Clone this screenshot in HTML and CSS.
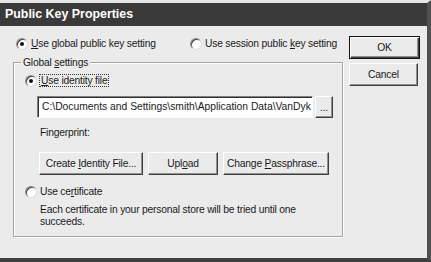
FILE: index.html
```html
<!DOCTYPE html>
<html>
<head>
<meta charset="utf-8">
<link rel="stylesheet" href="styles.css">
</head>
<body>
<div class="window">
  <div class="titlebar">Public Key Properties</div>
  <div class="main">
    <div class="left">
      <div class="toprow">
        <label class="radio r-global"><span class="dot checked"></span><span><u>U</u>se global public key setting</span></label>
        <label class="radio r-session"><span class="dot"></span><span>Use session public <u>k</u>ey setting</span></label>
      </div>
      <div class="group">
        <div class="legend">Global <u>s</u>ettings</div>
        <label class="radio r-identity"><span class="dot checked"></span><span class="focus"><u>U</u>se identity file</span></label>
        <div class="pathrow">
          <div class="field">C:\Documents and Settings\smith\Application Data\VanDyk</div>
          <div class="btn browse"><span>...</span></div>
        </div>
        <div class="fp">Fingerprint:</div>
        <div class="btnrow">
          <div class="btn b-create"><span>Create <u>I</u>dentity File...</span></div>
          <div class="btn b-upload"><span>Upl<u>o</u>ad</span></div>
          <div class="btn b-change"><span>Change <u>P</u>assphrase...</span></div>
        </div>
        <label class="radio r-cert"><span class="dot"></span><span>Use ce<u>r</u>tificate</span></label>
        <div class="desc">Each certificate in your personal store will be tried until one<br>succeeds.</div>
      </div>
    </div>
    <div class="right">
      <div class="btn default"><span>OK</span></div>
      <div class="btn cancel"><span>Cancel</span></div>
    </div>
  </div>
</div>
</body>
</html>
```
FILE: styles.css
```css
* { box-sizing: border-box; }
html, body { margin: 0; padding: 0; background: #e9e9e9; }
body { font-family: "Liberation Sans", Arial, sans-serif; font-size: 10.3px; letter-spacing: -0.2px; color: #1a1a1a; }
.window {
  width: 431px; height: 262px; background: #ebebeb;
  border-top: 3px solid #e6e6e6; border-right: 4px solid #505050; border-bottom: 4px solid #404040;
  display: flex; flex-direction: column;
}
.titlebar {
  height: 23px; background: #3a3a3a; color: #fff; font-weight: bold; font-size: 12.4px; letter-spacing: 0;
  line-height: 23px; padding-left: 5px;
}
.main { display: flex; flex: 1; }
.left { width: 343px; padding-left: 13px; flex: none; }
.right { display: flex; flex-direction: column; padding-left: 6px; padding-top: 10px; gap: 4px; }
.toprow { display: flex; height: 36px; padding-top: 10px; padding-left: 3px; white-space: nowrap; }
.radio { display: flex; align-items: center; height: 15px; gap: 3px; white-space: nowrap; }
.r-global { width: 174px; flex: none; }
.dot {
  width: 12px; height: 12px; border-radius: 50%; background: #fff; flex: none;
  border: 1px solid; border-color: #8a8a8a #dcdcdc #dcdcdc #8a8a8a;
  box-shadow: inset 1px 1px 0 #404040; position: relative;
}
.dot.checked::after {
  content: ""; position: absolute; left: 3px; top: 3px; width: 4px; height: 4px; border-radius: 50%; background: #111;
}
.group {
  width: 330px; height: 175px;
  border: 1px solid #a4a4a4; box-shadow: inset 1px 1px 0 #fff, 1px 1px 0 #fff;
  padding-left: 11px;
}
.legend { margin-top: -7px; margin-left: -4px; background: #ebebeb; width: max-content; padding: 0 2px; line-height: 13px; }
.r-identity { margin-top: 4px; }
.focus { outline: 1px dotted #333; outline-offset: 0; padding: 0 1px; }
.pathrow { display: flex; margin-top: 8px; margin-left: 12px; gap: 2px; }
.field {
  width: 276px; height: 22px; background: #fff; line-height: 19px; padding-left: 4px; white-space: nowrap; overflow: hidden; letter-spacing: 0;
  border: 1px solid; border-color: #808080 #ffffff #ffffff #808080; box-shadow: inset 1px 1px 0 #303030;
}
.btn {
  background: #ebebeb; text-align: center; display: flex; align-items: center; justify-content: center; white-space: nowrap;
  border: 1px solid; border-color: #fff #404040 #404040 #fff; box-shadow: inset -1px -1px 0 #909090;
}
.browse { width: 18px; height: 22px; }
.fp { margin-top: 8px; margin-left: 15px; height: 13px; line-height: 13px; }
.btnrow { display: flex; gap: 5px; margin-top: 13px; margin-left: 14px; }
.btnrow .btn { height: 23px; }
.b-create { width: 104px; }
.b-upload { width: 70px; }
.b-change { width: 106px; }
.r-cert { margin-top: 9px; }
.desc { margin-left: 15px; margin-top: 5px; line-height: 12px; }
.default { width: 71px; height: 23px; border: 1px solid #111; box-shadow: inset 1px 1px 0 #fff, inset -1px -1px 0 #404040, inset -2px -2px 0 #909090; }
.cancel { width: 69px; height: 23px; }
u { text-decoration: underline; text-underline-offset: 1px; }
```
